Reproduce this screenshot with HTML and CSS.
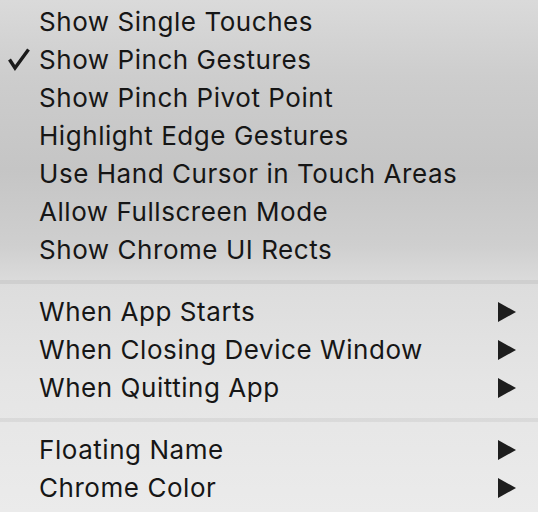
FILE: index.html
```html
<!DOCTYPE html>
<html lang="en">
  <head>
    <meta charset="UTF-8" />
    <title>Menu</title>
    <link rel="stylesheet" href="styles.css">
  </head>
  <body>
    <div class="menu">
      <div class="group">
        <div class="item">Show Single Touches</div>
        <div class="item">
          <svg class="check" width="24" height="24" viewBox="0 0 24 24">
            <path d="M2.5 12.5 L8 21 L21.5 2.5" fill="none" stroke="#1a1a1a" stroke-width="3.4" stroke-linejoin="miter"/>
          </svg>
          Show Pinch Gestures
        </div>
        <div class="item">Show Pinch Pivot Point</div>
        <div class="item">Highlight Edge Gestures</div>
        <div class="item">Use Hand Cursor in Touch Areas</div>
        <div class="item">Allow Fullscreen Mode</div>
        <div class="item">Show Chrome UI Rects</div>
      </div>
      <div class="sep"></div>
      <div class="group">
        <div class="item sub">When App Starts</div>
        <div class="item sub">When Closing Device Window</div>
        <div class="item sub">When Quitting App</div>
      </div>
      <div class="sep"></div>
      <div class="group">
        <div class="item sub">Floating Name</div>
        <div class="item sub">Chrome Color</div>
      </div>
    </div>
  </body>
</html>
```

FILE: styles.css
```css
* {
  padding: 0;
  margin: 0;
  box-sizing: border-box;
}
body {
  width: 538px;
  height: 512px;
  overflow: hidden;
  background: #e4e4e4;
  font-family: Inter, "Liberation Sans", sans-serif;
}
.menu {
  height: 512px;
  display: flex;
  flex-direction: column;
  background: linear-gradient(180deg, #dadada 0%, #cdcdcd 15%, #c5c5c5 33%, #cfcfcf 48%, #dddddd 56%, #e5e5e5 75%, #ebebeb 100%);
}
.group {
  display: flex;
  flex-direction: column;
}
.group:first-child {
  padding-top: 3px;
}
.item {
  height: 38px;
  line-height: 38px;
  padding-left: 39px;
  font-size: 26px;
  letter-spacing: 0.55px;
  color: #161616;
  position: relative;
  white-space: nowrap;
}
.check {
  position: absolute;
  left: 7px;
  top: 6px;
}
.sub::after {
  content: "";
  position: absolute;
  left: 498px;
  top: 9px;
  border-left: 18px solid #1e1e1e;
  border-top: 10px solid transparent;
  border-bottom: 10px solid transparent;
}
.sep {
  height: 4px;
  margin: 11px 0 9px;
  background: rgba(0, 0, 0, 0.055);
}
```
